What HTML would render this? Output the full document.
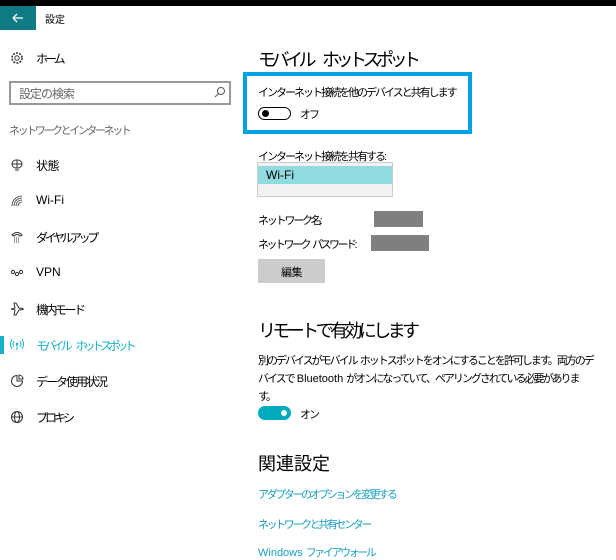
<!DOCTYPE html>
<html><head><meta charset="utf-8"><style>
*{margin:0;padding:0;box-sizing:border-box}
body{width:616px;height:551px;overflow:hidden;background:#fff;position:relative;font-family:"Liberation Sans","Noto Sans CJK JP",sans-serif;color:#000;font-size:11px;letter-spacing:-2px}
.a{position:absolute;white-space:nowrap}
.ic{position:absolute;left:10px;width:14px;height:14px}
.nav{position:absolute;left:36px;font-size:12px;letter-spacing:-3px}
.link{color:#1a9fc0;font-size:11px;letter-spacing:-2.4px}
.g{background:#7f7f7f;position:absolute}
.h{font-size:18px}
.sp{letter-spacing:0}
</style></head><body>
<div class="a" style="left:0;top:0;width:616px;height:6px;background:#000"></div>
<div class="a" style="left:0;top:6px;width:36px;height:24px;background:#0f7b85"></div>
<svg class="a" style="left:11px;top:12px" width="14" height="12"><path d="M2 6H12M2 6L6 2M2 6L6 10" stroke="#fff" stroke-width="1.3" fill="none"/></svg>
<div class="a" style="left:45px;top:11px;font-size:10px;letter-spacing:0">設定</div>

<svg class="ic" style="top:51px" viewBox="0 0 14 14"><circle cx="7" cy="7" r="2.2" fill="none" stroke="#333"/><circle cx="7" cy="7" r="5" fill="none" stroke="#333" stroke-dasharray="2 1.2" stroke-width="1.6"/></svg>
<div class="nav" style="top:50px">ホーム</div>
<div class="a" style="left:9px;top:81px;width:222px;height:24px;border:2px solid #999"></div>
<div class="a" style="left:19px;top:85px;color:#666;font-size:12px;letter-spacing:-1px">設定の検索</div>
<svg class="a" style="left:214px;top:86px" width="12" height="12"><circle cx="7" cy="5" r="3.5" fill="none" stroke="#555"/><path d="M4.5 7.5L1 11" stroke="#555"/></svg>
<div class="a" style="left:9px;top:122px;color:#666;font-size:11px;letter-spacing:-2.4px">ネットワークとインターネット</div>

<svg class="ic" style="top:158px" viewBox="0 0 14 14"><rect x="2" y="2" width="10" height="8" rx="4" fill="none" stroke="#333"/><path d="M2 6H12M7 2V10M5 12H9" stroke="#333"/></svg>
<div class="nav" style="top:157px;letter-spacing:-0.5px">状態</div>
<svg class="ic" style="top:194px" viewBox="0 0 14 14"><path d="M2 12A10 10 0 0 1 12 2M4 12A8 8 0 0 1 12 4M6 12A6 6 0 0 1 12 6M8 12A4 4 0 0 1 12 8" stroke="#333" fill="none" stroke-width=".8"/></svg>
<div class="nav" style="top:193px;letter-spacing:0">Wi-Fi</div>
<svg class="ic" style="top:230px" viewBox="0 0 14 14"><path d="M2 5Q7 0 12 5L10 6Q7 3 4 6Z" fill="none" stroke="#333"/><path d="M4 8H10M4 10H10M4 12H10" stroke="#333" stroke-dasharray="1 1"/></svg>
<div class="nav" style="top:229px;letter-spacing:-3.4px">ダイヤルアップ</div>
<svg class="ic" style="top:266px" viewBox="0 0 14 14"><circle cx="3" cy="6" r="1.6" fill="none" stroke="#333"/><circle cx="7" cy="8" r="1.6" fill="none" stroke="#333"/><circle cx="11" cy="6" r="1.6" fill="none" stroke="#333"/></svg>
<div class="nav" style="top:265px;letter-spacing:0">VPN</div>
<svg class="ic" style="top:302px" viewBox="0 0 14 14"><path d="M1 7L5 6L4 1L6 1L9 6L13 6.5L13 7.5L9 8L6 13L4 13L5 8Z" fill="none" stroke="#333"/></svg>
<div class="nav" style="top:301px;letter-spacing:-2.5px">機内モード</div>
<div class="a" style="left:0;top:336px;width:4px;height:18px;background:#1ab0c8"></div>
<svg class="ic" style="top:338px" viewBox="0 0 14 14"><circle cx="7" cy="6" r="1.3" fill="#1ab0c8"/><path d="M7 7V12M4 3Q2 6 4 9M10 3Q12 6 10 9M2 1Q-1 6 2 11M12 1Q15 6 12 11" stroke="#1ab0c8" fill="none"/></svg>
<div class="nav" style="top:337px;color:#1ab0c8;letter-spacing:-3.8px">モバイル<span class="sp">&nbsp;&nbsp;</span>ホットスポット</div>
<svg class="ic" style="top:374px" viewBox="0 0 14 14"><path d="M7 1.5A5.5 5.5 0 1 0 12.5 7H7Z" fill="none" stroke="#333"/><path d="M9 1V5H13A4 4 0 0 0 9 1Z" fill="none" stroke="#333"/></svg>
<div class="nav" style="top:373px;letter-spacing:-2px">データ使用状況</div>
<svg class="ic" style="top:410px" viewBox="0 0 14 14"><circle cx="7" cy="7" r="5.5" fill="none" stroke="#333"/><ellipse cx="7" cy="7" rx="2.5" ry="5.5" fill="none" stroke="#333"/><path d="M1.5 7H12.5" stroke="#333"/></svg>
<div class="nav" style="top:409px;letter-spacing:-3px">プロキシ</div>

<div class="a h" style="left:258px;top:46px;letter-spacing:-4.5px">モバイル<span class="sp">&nbsp;&nbsp;</span>ホットスポット</div>
<div class="a" style="left:243px;top:72px;width:229px;height:62px;border:4px solid #00a2e3"></div>
<div class="a" style="left:258px;top:84px">インターネット接続を他のデバイスと共有します</div>
<div class="a" style="left:258px;top:107px;width:33px;height:13px;border:1.5px solid #000;border-radius:7px"></div>
<div class="a" style="left:262px;top:110px;width:7px;height:7px;border-radius:50%;background:#000"></div>
<div class="a" style="left:300px;top:106px">オフ</div>
<div class="a" style="left:258px;top:148px;letter-spacing:-2px">インターネット接続を共有する:</div>
<div class="a" style="left:257px;top:162px;width:136px;height:35px;border:1px solid #ccc;background:#f2f2f2"></div>
<div class="a" style="left:258px;top:166px;width:134px;height:18px;background:#8fdbe0"></div>
<div class="a" style="left:266px;top:168px;font-size:12px;letter-spacing:0">Wi-Fi</div>
<div class="a" style="left:258px;top:212px;letter-spacing:-2.2px">ネットワーク名:</div>
<div class="g" style="left:374px;top:211px;width:49px;height:16px"></div>
<div class="a" style="left:258px;top:236px;letter-spacing:-2.5px">ネットワーク<span class="sp">&nbsp;</span>パスワード:</div>
<div class="g" style="left:371px;top:235px;width:58px;height:16px"></div>
<div class="a" style="left:258px;top:259px;width:67px;height:24px;background:#ccc"></div>
<div class="a" style="left:281px;top:264px;letter-spacing:-0.5px">編集</div>

<div class="a h" style="left:258px;top:317px;letter-spacing:-3.6px">リモートで有効にします</div>
<div class="a" style="left:258px;top:352px;line-height:18px">別のデバイスがモバイル<span class="sp">&nbsp;</span>ホットスポットをオンにすることを許可します。両方のデ</div>
<div class="a" style="left:258px;top:370px;line-height:18px">バイスで<span class="sp"> Bluetooth </span>がオンになっていて、ペアリングされている必要がありま</div>
<div class="a" style="left:258px;top:388px;line-height:18px">す。</div>
<div class="a" style="left:258px;top:406px;width:33px;height:14px;border-radius:7px;background:#00aabf"></div>
<div class="a" style="left:281px;top:410px;width:6px;height:6px;border-radius:50%;background:#fff"></div>
<div class="a" style="left:300px;top:406px">オン</div>
<div class="a h" style="left:258px;top:450px;letter-spacing:0">関連設定</div>
<div class="a link" style="left:258px;top:486px">アダプターのオプションを変更する</div>
<div class="a link" style="left:258px;top:516px">ネットワークと共有センター</div>
<div class="a link" style="left:258px;top:544px"><span class="sp">Windows </span>ファイアウォール</div>
</body></html>
